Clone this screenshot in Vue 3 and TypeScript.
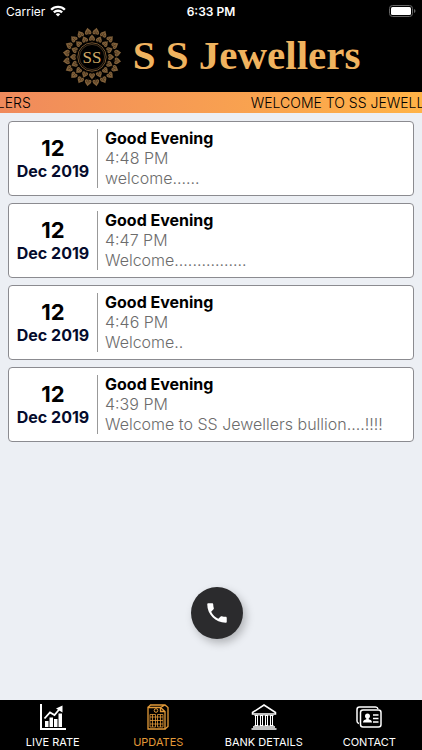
<script setup lang="ts">
interface Update {
  day: string
  month: string
  title: string
  time: string
  message: string
}

const updates: Update[] = [
  { day: '12', month: 'Dec 2019', title: 'Good Evening', time: '4:48 PM', message: 'welcome......' },
  { day: '12', month: 'Dec 2019', title: 'Good Evening', time: '4:47 PM', message: 'Welcome................' },
  { day: '12', month: 'Dec 2019', title: 'Good Evening', time: '4:46 PM', message: 'Welcome..' },
  { day: '12', month: 'Dec 2019', title: 'Good Evening', time: '4:39 PM', message: 'Welcome to SS Jewellers bullion....!!!!' },
]

const tickerText = 'WELCOME TO SS JEWELLERS'
const tickerOffset = 169

const outerLeaves = Array.from({ length: 20 }, (_, i) => (i + 0.5) * 18)
const innerLeaves = Array.from({ length: 16 }, (_, i) => i * 22.5)
</script>

<template>
  <div class="app">
    <header class="top">
      <div class="status">
        <div class="carrier">
          <span>Carrier</span>
          <svg width="16" height="12" viewBox="0 0 16 12" fill="#fff" aria-hidden="true">
            <path d="M8 11.6 5.7 9.3a3.3 3.3 0 0 1 4.6 0z" />
            <path d="M3 6.600a7.100 7.100 0 0 1 10 0L11.300 8.300a4.700 4.700 0 0 0-6.600 0z" />
            <path d="M.3 3.900a10.900 10.900 0 0 1 15.400 0L14 5.600a8.500 8.500 0 0 0-12 0z" />
          </svg>
        </div>
        <span class="clock">6:33 PM</span>
        <div class="power">
          <svg width="27" height="12" viewBox="0 0 27 12" aria-hidden="true">
            <rect x=".5" y=".5" width="23" height="11" rx="3" fill="none" stroke="#666" />
            <rect x="2" y="2" width="20" height="8" rx="1.500" fill="#fff" />
            <path d="M25 4q1.500 .5 1.500 2t-1.500 2z" fill="#666" />
          </svg>
        </div>
      </div>
      <div class="brand">
        <svg class="logo" width="60" height="60" viewBox="-30 -30 60 60" aria-hidden="true">
          <defs>
            <g id="leaf">
              <path d="M0-4C.8-2.400 3.300-1.200 3.300 1 3.300 2.900 1.200 3.400 0 1.900-1.200 3.400-3.300 2.900-3.300 1-3.300-1.200-.8-2.400 0-4Z" fill="#80603a" />
              <path d="M0-1.500V3.800M-1.700 1.600V0M1.700 1.600V0" fill="none" stroke="#3a2814" stroke-width=".6" />
            </g>
          </defs>
          <use v-for="a in outerLeaves" :key="'o' + a" href="#leaf" :transform="`rotate(${a}) translate(0 -25.500)`" />
          <use v-for="a in innerLeaves" :key="'i' + a" href="#leaf" :transform="`rotate(${a}) translate(0 -18.700) scale(.92)`" />
          <circle r="14.200" fill="#000" stroke="#73532f" stroke-width="1" />
          <circle r="12.600" fill="none" stroke="#6d5130" stroke-width=".6" />
          <text x="0" y="6" text-anchor="middle" class="monogram">SS</text>
        </svg>
        <h1>S S Jewellers</h1>
      </div>
    </header>

    <div class="ticker">
      <div class="track" :style="{ transform: `translateX(-${tickerOffset}px)` }">
        <span>{{ tickerText }}</span>
        <span>{{ tickerText }}</span>
      </div>
    </div>

    <main class="list">
      <article v-for="u in updates" :key="u.time" class="card">
        <div class="date">
          <span class="day">{{ u.day }}</span>
          <span class="month">{{ u.month }}</span>
        </div>
        <div class="body">
          <h2>{{ u.title }}</h2>
          <p>{{ u.time }}</p>
          <p>{{ u.message }}</p>
        </div>
      </article>
    </main>

    <button class="call" type="button" aria-label="Call">
      <svg width="26" height="26" viewBox="0 0 24 24" fill="#fff" aria-hidden="true">
        <path d="M6.620 10.790c1.440 2.830 3.760 5.140 6.590 6.590l2.200-2.200c.27-.27.67-.36 1.020-.24 1.120.37 2.330.57 3.570.57.55 0 1 .45 1 1V20c0 .55-.45 1-1 1-9.390 0-17-7.610-17-17 0-.55.45-1 1-1h3.500c.55 0 1 .45 1 1 0 1.250.2 2.450.57 3.570.11.35.03.74-.25 1.020l-2.200 2.200z" />
      </svg>
    </button>

    <nav class="tabs">
      <a href="#live-rate">
        <svg width="26" height="26" viewBox="0 0 26 26" fill="currentColor" aria-hidden="true">
          <path d="M0 0h2v24h24v2H0z" />
          <path d="M5 17h3.500v6H5zM9.500 13.500H13V23H9.500zM14 15h3.500v8H14zM18.500 9.500H22V23h-3.500z" />
          <path d="M4.500 14.500 10 8.500l4.500 2.500L20 4.500" fill="none" stroke="currentColor" stroke-width="1.800" />
          <path d="M16 4.500 22.500 1.500 22.500 8.500z" />
        </svg>
        <span>LIVE RATE</span>
      </a>
      <a href="#updates" class="active" aria-current="page">
        <svg width="26" height="26" viewBox="0 0 26 26" fill="none" stroke="currentColor" aria-hidden="true">
          <path d="M3 3.500h12.500l4.500 4v17.500H3zM15.500 3.500v4H20" stroke-width="1.300" />
          <path d="M3 3.500 5.500 1H20l3 2.500v19L20 25M15.500 3.500 20 1" stroke-width="1.300" />
          <circle cx="11" cy="6.500" r="1.800" />
          <path d="M5 10.500h5.500v12.500H5zM12.500 10.500H18v12.500h-5.500zM5 13h13M5 16.500h13M5 20h13M7.500 10.500V23M15.500 10.500V23" stroke-width=".8" />
        </svg>
        <span>UPDATES</span>
      </a>
      <a href="#bank-details">
        <svg width="26" height="26" viewBox="0 0 26 26" fill="none" stroke="currentColor" aria-hidden="true">
          <path d="M1.500 8.500 13 1l11.500 7.500v1.500h-23z" stroke-width="1.500" />
          <path d="M3.500 11.500h4M8.500 11.500h4M13.500 11.500h4M18.500 11.500h4M3.500 21.500h4M8.500 21.500h4M13.500 21.500h4M18.500 21.500h4" />
          <path d="M4.500 11v10.500M6.500 11v10.500M9.500 11v10.500M11.500 11v10.500M14.500 11v10.500M16.500 11v10.500M19.500 11v10.500M21.500 11v10.500" />
          <path d="M2 23h22M.5 25h25" stroke-width="1.300" />
        </svg>
        <span>BANK DETAILS</span>
      </a>
      <a href="#contact">
        <svg width="26" height="26" viewBox="0 0 26 26" fill="none" stroke="currentColor" aria-hidden="true">
          <path d="M3 19.500q-2-.5-2-2.500V5.500Q1 3 3.500 3h16q2 0 2.500 2" stroke-width="1.500" />
          <rect x="4.500" y="6" width="20.500" height="17" rx="2.500" stroke-width="1.500" />
          <path d="M17 11h5.500M17 14.500h5.500M17 18h5.500" stroke-width="1.500" />
          <path d="M11.500 9.500c1.700 0 2.500 1.100 2.500 2.500 0 1-.5 2-1.300 2.400v.8c1.800.5 3.300 1.100 3.300 3.300H7c0-2.200 1.500-2.800 3.300-3.300v-.8C9.500 14 9 13 9 12c0-1.400.8-2.500 2.500-2.500z" fill="currentColor" stroke="none" />
        </svg>
        <span>CONTACT</span>
      </a>
    </nav>
  </div>
</template>

<style>
body {
  background: #eceff4;
}
</style>

<style scoped>
.app {
  min-height: 100vh;
  display: flex;
  flex-direction: column;
  background: #eceff4;
  font-family: Inter, "Liberation Sans", sans-serif;
  color: #000;
}

.top {
  background: #000;
  padding-bottom: 5px;
}

.status {
  display: grid;
  grid-template-columns: 1fr auto 1fr;
  align-items: center;
  height: 22px;
  padding: 0 6px;
  color: #fff;
  font-size: 12px;
}

.carrier {
  display: flex;
  align-items: center;
  gap: 5px;
}

.clock {
  font-weight: 600;
}

.power {
  display: flex;
  justify-content: flex-end;
}

.brand {
  display: flex;
  align-items: center;
  justify-content: center;
  gap: 11px;
  height: 65px;
}

.logo {
  flex: none;
  margin-top: 4px;
}

.monogram {
  font-family: "Liberation Serif", serif;
  font-size: 17px;
  fill: #cfa866;
}

h1 {
  margin: 0;
  font-family: "Liberation Serif", serif;
  font-size: 41px;
  line-height: 48px;
  font-weight: 700;
  color: #f0b35f;
  white-space: nowrap;
}

.ticker {
  overflow: hidden;
  background: linear-gradient(90deg, #f08a5c, #ffb347);
}

.track {
  display: flex;
  gap: 220px;
  width: max-content;
  font-size: 14px;
  line-height: 21px;
  font-weight: 300;
  white-space: nowrap;
}

.list {
  display: flex;
  flex-direction: column;
  gap: 7px;
  padding: 8px;
}

.card {
  display: flex;
  padding: 7px;
  background: #fff;
  border: 1px solid #8b8b90;
  border-radius: 4px;
}

.date {
  display: flex;
  flex-direction: column;
  align-items: center;
  justify-content: center;
  flex: none;
  width: 74px;
  padding: 0 7px 2px 0;
  border-right: 1px solid #999;
  font-weight: 700;
}

.day {
  font-size: 22px;
  line-height: 26px;
}

.month {
  font-size: 16px;
  line-height: 20px;
  color: #050b2c;
  white-space: nowrap;
}

.body {
  padding-left: 7px;
  font-size: 16px;
  line-height: 20px;
}

.body h2 {
  margin: 0;
  font-size: 16px;
  line-height: 19px;
  font-weight: 700;
}

.body p {
  margin: 0;
  font-weight: 300;
  color: #6c6c6c;
}

.call {
  display: flex;
  align-items: center;
  justify-content: center;
  align-self: center;
  width: 52px;
  height: 52px;
  margin: auto 0 61px 12px;
  padding: 0;
  border: 0;
  border-radius: 50%;
  background: #2b2b2d;
  box-shadow: 3px 4px 8px rgba(0, 0, 0, 0.25);
}

.tabs {
  display: grid;
  grid-template-columns: repeat(4, 1fr);
  background: #000;
}

.tabs a {
  display: flex;
  flex-direction: column;
  align-items: center;
  gap: 4px;
  padding: 4px 0 0;
  color: #fff;
  font-size: 11px;
  line-height: 16px;
  text-decoration: none;
  white-space: nowrap;
}

.tabs a.active {
  color: #e39a38;
}
</style>
